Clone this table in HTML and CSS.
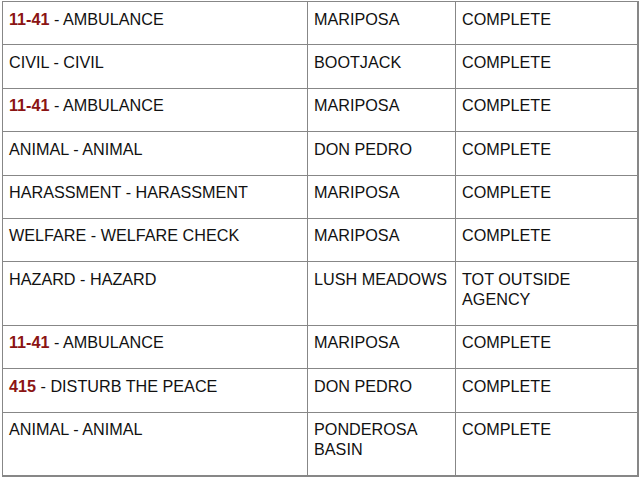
FILE: index.html
```html
<!DOCTYPE html>
<html>
<head>
<meta charset="utf-8">
<link rel="stylesheet" href="styles.css">
</head>
<body>
<table class="log">
<colgroup><col class="c1"><col class="c2"><col class="c3"></colgroup>
<tr><td><span class="code">11-41</span> - AMBULANCE</td><td>MARIPOSA</td><td>COMPLETE</td></tr>
<tr><td>CIVIL - CIVIL</td><td>BOOTJACK</td><td>COMPLETE</td></tr>
<tr><td><span class="code">11-41</span> - AMBULANCE</td><td>MARIPOSA</td><td>COMPLETE</td></tr>
<tr><td>ANIMAL - ANIMAL</td><td>DON PEDRO</td><td>COMPLETE</td></tr>
<tr><td>HARASSMENT - HARASSMENT</td><td>MARIPOSA</td><td>COMPLETE</td></tr>
<tr><td>WELFARE - WELFARE CHECK</td><td>MARIPOSA</td><td>COMPLETE</td></tr>
<tr><td>HAZARD - HAZARD</td><td>LUSH MEADOWS</td><td>TOT OUTSIDE AGENCY</td></tr>
<tr><td><span class="code">11-41</span> - AMBULANCE</td><td>MARIPOSA</td><td>COMPLETE</td></tr>
<tr><td><span class="code">415</span> - DISTURB THE PEACE</td><td>DON PEDRO</td><td>COMPLETE</td></tr>
<tr><td>ANIMAL - ANIMAL</td><td>PONDEROSA BASIN</td><td>COMPLETE</td></tr>
</table>
</body>
</html>
```
FILE: styles.css
```css
html, body {
  margin: 0;
  padding: 0;
  background: #fff;
}
body {
  padding: 1px 0 0 2px;
  font-family: "Liberation Sans", Arial, sans-serif;
  font-size: 16.2px;
  color: #111;
}
.log {
  border-collapse: collapse;
  table-layout: fixed;
  width: 635px;
}
.c1 { width: 305px; }
.c2 { width: 148px; }
.c3 { width: 182px; }
.log td {
  border: 1px solid #878787;
  padding: 6.5px 6px 15.9px 6px;
  line-height: 20px;
  vertical-align: top;
}
.log tr td:last-child { border-right-width: 2px; }
.log tr:last-child td { border-bottom-width: 2px; }
.code {
  color: #8b1414;
  font-weight: bold;
}
```
